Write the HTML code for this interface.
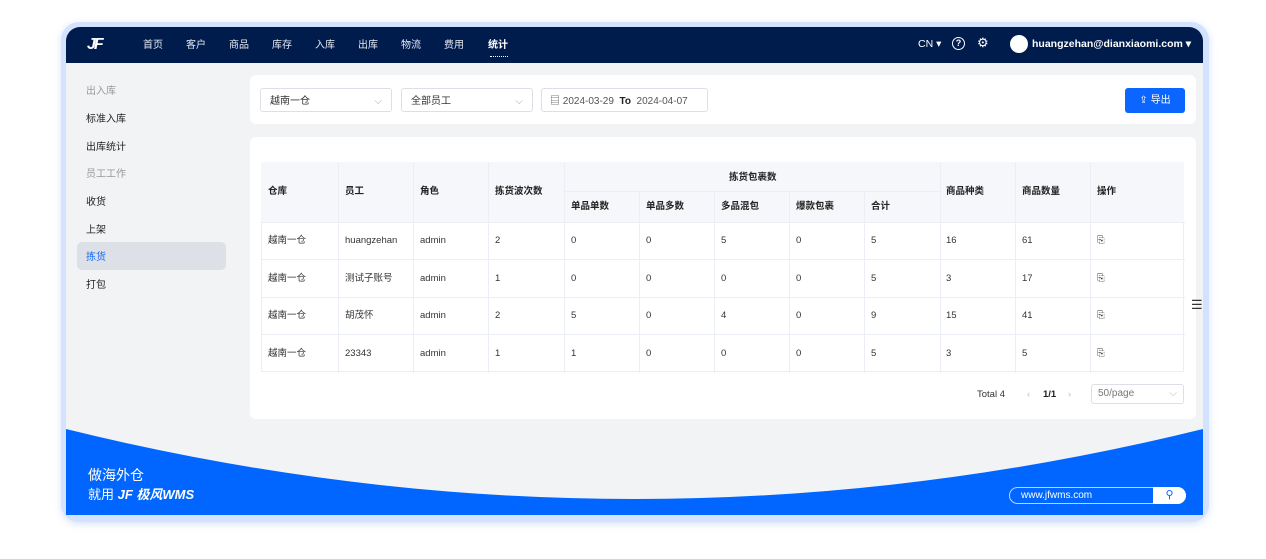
<!DOCTYPE html>
<html><head><meta charset="utf-8"><style>
*{margin:0;padding:0;box-sizing:border-box}
body{width:1266px;height:559px;background:#fff;font-family:"Liberation Sans","Noto Sans CJK SC",sans-serif;position:relative;overflow:hidden;color:#222;font-size:10px;line-height:16px}
.a{position:absolute}
#frame{left:61px;top:22px;width:1148px;height:500px;border-radius:18px;background:#d2e2ff;box-shadow:0 2px 8px rgba(120,160,230,.3)}
#inner{left:66px;top:27px;width:1137px;height:488px;border-radius:14px 14px 0 0;background:#f2f3f5;overflow:hidden}
#nav{left:0;top:0;width:1137px;height:36px;background:#001c4d}
.nv{top:11px;color:#e6eaf2;font-size:10px}
.side{left:20px;font-size:10px;color:#222}
.card{background:#fff;border-radius:6px}
.sel{height:24px;border:1px solid #dcdfe6;border-radius:3px;background:#fff;color:#333;font-size:10px;padding:2px 9px 0;line-height:22px}
.cell{position:absolute;font-size:9.5px;color:#333;line-height:16px}
.h{font-weight:bold;color:#222}
</style></head><body>
<div id="frame" class="a"></div>
<div id="inner" class="a">
 <div id="nav" class="a">
  <div class="a" style="left:21px;top:10px;color:#fff;font-weight:bold;font-style:italic;font-size:16px;letter-spacing:-2px;line-height:16px">JF</div>
  <div class="a nv" style="left:77px">首页</div>
  <div class="a nv" style="left:120px">客户</div>
  <div class="a nv" style="left:163px">商品</div>
  <div class="a nv" style="left:206px">库存</div>
  <div class="a nv" style="left:249px">入库</div>
  <div class="a nv" style="left:292px">出库</div>
  <div class="a nv" style="left:335px">物流</div>
  <div class="a nv" style="left:378px">费用</div>
  <div class="a nv" style="left:422px;color:#fff;font-weight:bold">统计</div>
  <div class="a" style="left:424px;top:28px;width:18px;height:2px;border-bottom:1px dotted #fff"></div>
  <div class="a" style="left:852px;top:9px;color:#fff;font-size:10.5px">CN ▾</div>
  <div class="a" style="left:886px;top:10px;width:13px;height:13px;border:1.5px solid #fff;border-radius:50%;color:#fff;font-size:9px;text-align:center;line-height:10px;font-weight:bold">?</div>
  <div class="a" style="left:911px;top:9px;color:#fff;font-size:13px;line-height:14px">⚙</div>
  <div class="a" style="left:944px;top:8px;width:18px;height:18px;border-radius:50%;background:#fff"></div>
  <div class="a" style="left:966px;top:9px;color:#fff;font-weight:bold;font-size:10.5px">huangzehan@dianxiaomi.com ▾</div>
 </div>
 <div class="a side" style="top:57px;color:#999">出入库</div>
 <div class="a side" style="top:85px">标准入库</div>
 <div class="a side" style="top:113px">出库统计</div>
 <div class="a side" style="top:140px;color:#999">员工工作</div>
 <div class="a side" style="top:168px">收货</div>
 <div class="a side" style="top:196px">上架</div>
 <div class="a" style="left:11px;top:215px;width:149px;height:28px;background:#dde0e7;border-radius:5px"></div>
 <div class="a side" style="top:223px;color:#1a6cf0">拣货</div>
 <div class="a side" style="top:251px">打包</div>

 <div class="a card" style="left:184px;top:48px;width:946px;height:49px"></div>
 <div class="a sel" style="left:194px;top:61px;width:132px">越南一仓<span style="float:right;color:#aaa">⌵</span></div>
 <div class="a sel" style="left:335px;top:61px;width:132px">全部员工<span style="float:right;color:#aaa">⌵</span></div>
 <div class="a sel" style="left:475px;top:61px;width:167px;padding-left:8px;color:#555">▤ 2024-03-29 &nbsp;<b style="color:#222">To</b>&nbsp; 2024-04-07</div>
 <div class="a" style="left:1059px;top:61px;width:60px;height:25px;background:#0a66ff;border-radius:3px;color:#fff;font-size:10px;text-align:center;line-height:25px">⇪ 导出</div>

 <div class="a card" style="left:184px;top:110px;width:946px;height:282px"></div>
 <div class="a" style="left:195px;top:135px;width:923px;height:210px;border:1px solid #ebeef5;background:#fff"></div>
 <div class="a" style="left:195px;top:135px;width:923px;height:60px;background:#f5f7fa"></div>
 <svg class="a" style="left:195px;top:135px" width="924" height="211">
  <g stroke="#ebeef5" stroke-width="1">
   <line x1="0" y1="60.5" x2="924" y2="60.5"/><line x1="303" y1="29.5" x2="679" y2="29.5"/>
   <line x1="0" y1="97.5" x2="924" y2="97.5"/><line x1="0" y1="135.5" x2="924" y2="135.5"/><line x1="0" y1="172.5" x2="924" y2="172.5"/>
   <line x1="77.5" y1="0" x2="77.5" y2="211"/><line x1="152.5" y1="0" x2="152.5" y2="211"/><line x1="227.5" y1="0" x2="227.5" y2="211"/><line x1="303.5" y1="0" x2="303.5" y2="211"/>
   <line x1="378.5" y1="29" x2="378.5" y2="211"/><line x1="453.5" y1="29" x2="453.5" y2="211"/><line x1="528.5" y1="29" x2="528.5" y2="211"/><line x1="603.5" y1="29" x2="603.5" y2="211"/>
   <line x1="679.5" y1="0" x2="679.5" y2="211"/><line x1="754.5" y1="0" x2="754.5" y2="211"/><line x1="829.5" y1="0" x2="829.5" y2="211"/>
  </g>
 </svg>
 <div class="cell h" style="left:202px;top:157px">仓库</div>
 <div class="cell h" style="left:279px;top:157px">员工</div>
 <div class="cell h" style="left:354px;top:157px">角色</div>
 <div class="cell h" style="left:429px;top:157px">拣货波次数</div>
 <div class="cell h" style="left:663px;top:143px">拣货包裹数</div>
 <div class="cell h" style="left:505px;top:172px">单品单数</div>
 <div class="cell h" style="left:580px;top:172px">单品多数</div>
 <div class="cell h" style="left:655px;top:172px">多品混包</div>
 <div class="cell h" style="left:730px;top:172px">爆款包裹</div>
 <div class="cell h" style="left:805px;top:172px">合计</div>
 <div class="cell h" style="left:880px;top:157px">商品种类</div>
 <div class="cell h" style="left:956px;top:157px">商品数量</div>
 <div class="cell h" style="left:1031px;top:157px">操作</div>

 <div class="cell" style="left:202px;top:206px">越南一仓</div><div class="cell" style="left:279px;top:206px">huangzehan</div><div class="cell" style="left:354px;top:206px">admin</div><div class="cell" style="left:429px;top:206px">2</div><div class="cell" style="left:505px;top:206px">0</div><div class="cell" style="left:580px;top:206px">0</div><div class="cell" style="left:655px;top:206px">5</div><div class="cell" style="left:730px;top:206px">0</div><div class="cell" style="left:805px;top:206px">5</div><div class="cell" style="left:880px;top:206px">16</div><div class="cell" style="left:956px;top:206px">61</div><div class="cell" style="left:1031px;top:206px">⎘</div>
 <div class="cell" style="left:202px;top:244px">越南一仓</div><div class="cell" style="left:279px;top:244px">测试子账号</div><div class="cell" style="left:354px;top:244px">admin</div><div class="cell" style="left:429px;top:244px">1</div><div class="cell" style="left:505px;top:244px">0</div><div class="cell" style="left:580px;top:244px">0</div><div class="cell" style="left:655px;top:244px">0</div><div class="cell" style="left:730px;top:244px">0</div><div class="cell" style="left:805px;top:244px">5</div><div class="cell" style="left:880px;top:244px">3</div><div class="cell" style="left:956px;top:244px">17</div><div class="cell" style="left:1031px;top:244px">⎘</div>
 <div class="cell" style="left:202px;top:281px">越南一仓</div><div class="cell" style="left:279px;top:281px">胡茂怀</div><div class="cell" style="left:354px;top:281px">admin</div><div class="cell" style="left:429px;top:281px">2</div><div class="cell" style="left:505px;top:281px">5</div><div class="cell" style="left:580px;top:281px">0</div><div class="cell" style="left:655px;top:281px">4</div><div class="cell" style="left:730px;top:281px">0</div><div class="cell" style="left:805px;top:281px">9</div><div class="cell" style="left:880px;top:281px">15</div><div class="cell" style="left:956px;top:281px">41</div><div class="cell" style="left:1031px;top:281px">⎘</div>
 <div class="cell" style="left:202px;top:319px">越南一仓</div><div class="cell" style="left:279px;top:319px">23343</div><div class="cell" style="left:354px;top:319px">admin</div><div class="cell" style="left:429px;top:319px">1</div><div class="cell" style="left:505px;top:319px">1</div><div class="cell" style="left:580px;top:319px">0</div><div class="cell" style="left:655px;top:319px">0</div><div class="cell" style="left:730px;top:319px">0</div><div class="cell" style="left:805px;top:319px">5</div><div class="cell" style="left:880px;top:319px">3</div><div class="cell" style="left:956px;top:319px">5</div><div class="cell" style="left:1031px;top:319px">⎘</div>

 <div class="cell" style="left:911px;top:360px">Total 4</div>
 <div class="cell" style="left:961px;top:360px;color:#bbb">‹</div>
 <div class="cell h" style="left:977px;top:360px">1/1</div>
 <div class="cell" style="left:1002px;top:360px;color:#bbb">›</div>
 <div class="a sel" style="left:1025px;top:357px;width:93px;height:20px;line-height:18px;padding:0 6px;color:#777">50/page<span style="float:right;color:#bbb">⌵</span></div>
 <div class="a" style="left:1125px;top:270px;font-size:13px;color:#333">☰</div>

 <svg class="a" style="left:0;top:400px" width="1137" height="88">
  <path d="M0,2 Q568,142 1137,2 L1137,88 L0,88 Z" fill="#0066ff"/>
 </svg>
 <div class="a" style="left:22px;top:439px;color:#fff;font-size:14px;line-height:18px">做海外仓</div>
 <div class="a" style="left:22px;top:459px;color:#fff;font-size:13px;line-height:17px">就用 <b><i>JF 极风WMS</i></b></div>
 <div class="a" style="left:943px;top:460px;width:177px;height:17px;border:1px solid #bcd4ff;border-radius:9px;background:#0066ff"></div>
 <div class="a" style="left:955px;top:461px;color:#fff;font-size:10px">www.jfwms.com</div>
 <div class="a" style="left:1087px;top:460px;width:33px;height:17px;background:#fff;border-radius:0 9px 9px 0;color:#0066ff;font-size:11px;text-align:center;line-height:16px">⚲</div>
</div>
</body></html>
